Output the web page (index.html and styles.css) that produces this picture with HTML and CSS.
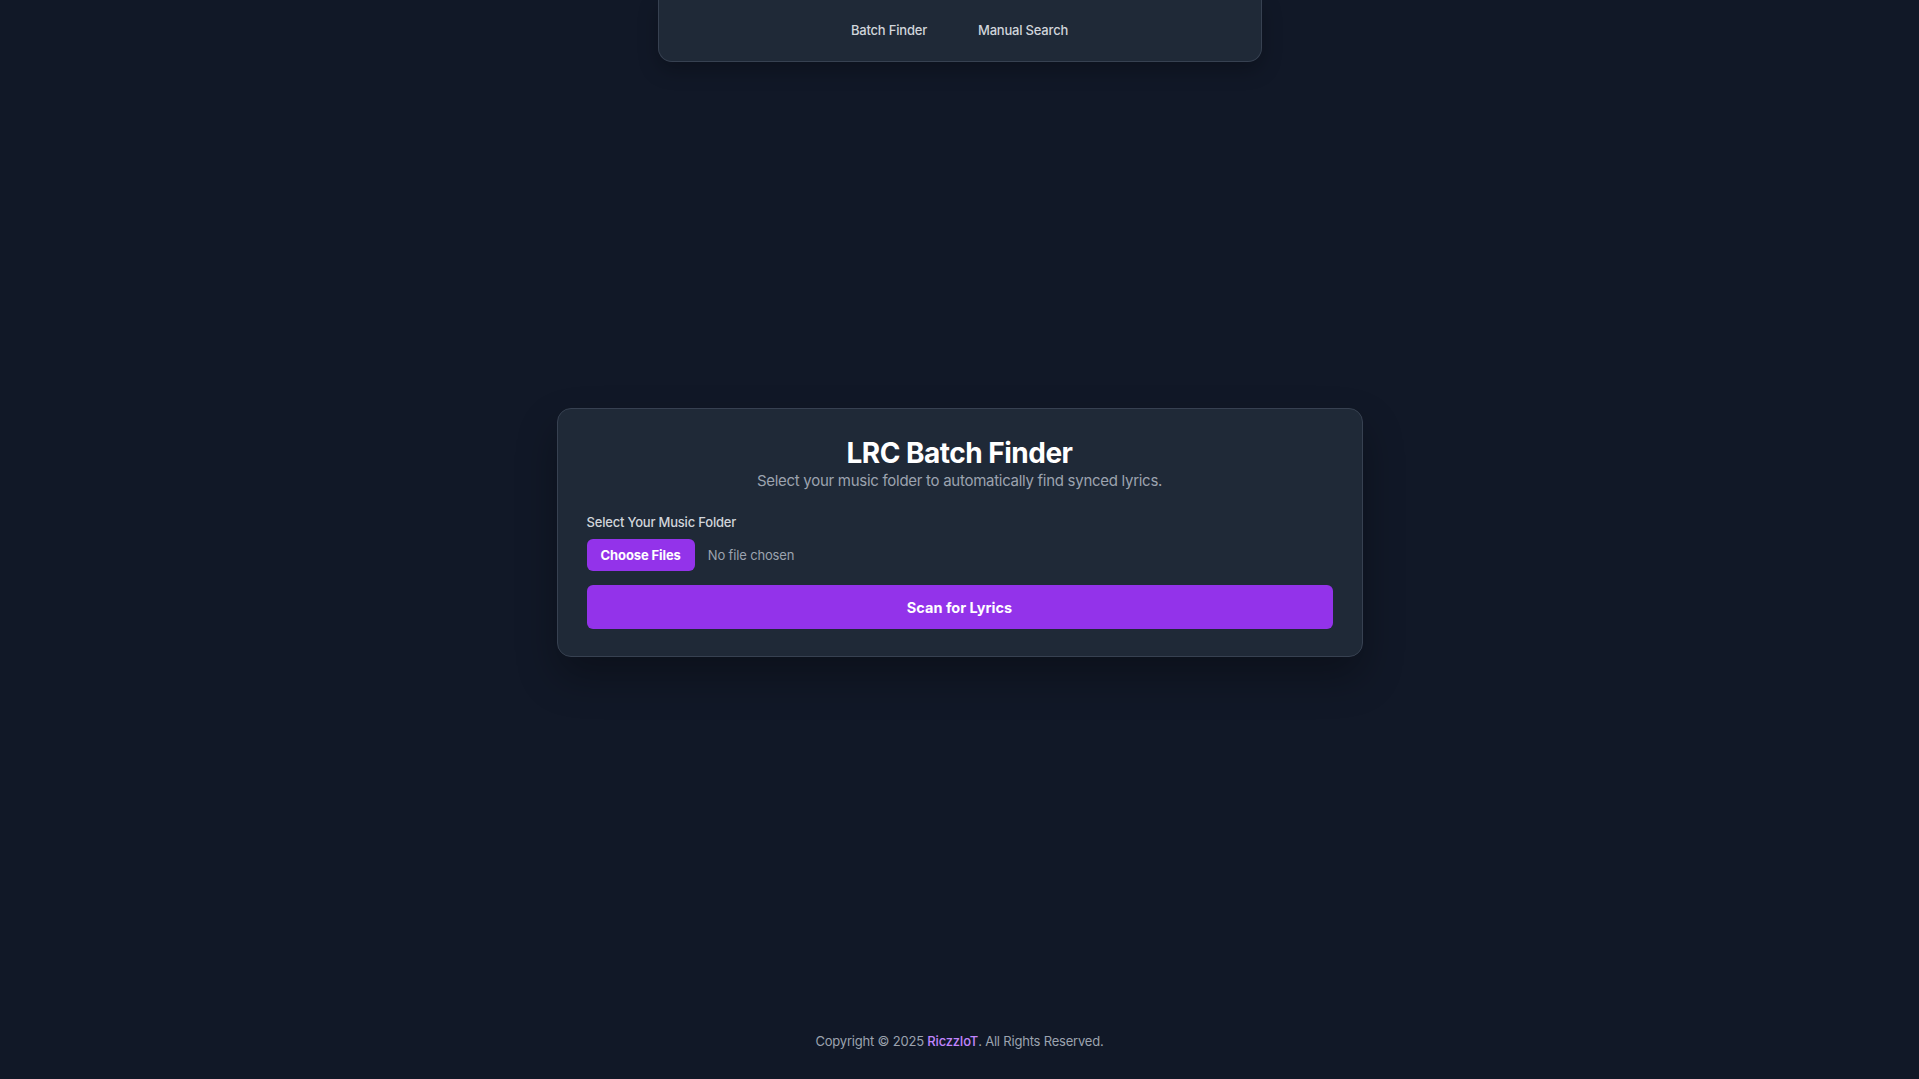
FILE: index.html
```html
<!DOCTYPE html>
<html lang="en">
<head>
<meta charset="utf-8">
<title>LRC Batch Finder</title>
<link rel="stylesheet" href="styles.css">
</head>
<body>
<div class="page">
  <header class="nav-wrap">
    <nav class="nav">
      <a class="nav-link" href="#">Batch Finder</a>
      <a class="nav-link" href="#">Manual Search</a>
    </nav>
  </header>
  <main class="main">
    <section class="card">
      <h1 class="title">LRC Batch Finder</h1>
      <p class="subtitle">Select your music folder to automatically find synced lyrics.</p>
      <div class="field-label">Select Your Music Folder</div>
      <label class="file-picker">
        <span class="file-btn">Choose Files</span>
        <span class="file-name">No file chosen</span>
      </label>
      <button class="scan-btn" type="button">Scan for Lyrics</button>
    </section>
  </main>
  <footer class="footer">
    <p class="footer-text">Copyright © 2025 <span class="brand">RiczzIoT</span>. All Rights Reserved.</p>
  </footer>
</div>
</body>
</html>
```

FILE: styles.css
```css
* { box-sizing: border-box; }
html, body { margin: 0; padding: 0; }
body {
  background: #111827;
  font-family: Inter, "Noto Sans", sans-serif;
  color: #d1d5db;
}
.page {
  min-height: 100vh;
  display: flex;
  flex-direction: column;
}
.nav-wrap {
  display: flex;
  justify-content: center;
}
.nav {
  width: 604px;
  height: 62px;
  background: #1f2937;
  border: 1px solid #374151;
  border-top: 0;
  border-radius: 0 0 14px 14px;
  display: flex;
  justify-content: center;
  align-items: flex-start;
  padding-top: 21px;
  gap: 51px;
  box-shadow: 0 8px 20px rgba(0,0,0,0.25);
}
.nav-link {
  color: #d1d5db;
  text-decoration: none;
  font-size: 13px;
  font-weight: 500;
  line-height: 18px;
  letter-spacing: -0.2px;
}
.main {
  flex: 1;
  display: flex;
  align-items: center;
  justify-content: center;
}
.card {
  width: 806px;
  background: #1f2937;
  border: 1px solid #374151;
  border-radius: 14px;
  padding: 28px 29px 27px;
  box-shadow: 0 20px 40px rgba(0,0,0,0.3);
}
.title {
  margin: 0;
  text-align: center;
  color: #ffffff;
  font-size: 28px;
  line-height: 32px;
  font-weight: 700;
  letter-spacing: -0.5px;
}
.subtitle {
  margin: 0 0 19px;
  text-align: center;
  color: #9ca3af;
  font-size: 15px;
  line-height: 24px;
  letter-spacing: -0.28px;
}
.field-label {
  font-size: 13px;
  font-weight: 500;
  line-height: 20px;
  color: #d1d5db;
  margin-bottom: 7px;
  letter-spacing: -0.2px;
}
.file-picker {
  display: flex;
  align-items: center;
  gap: 13px;
  margin-bottom: 14px;
}
.file-btn {
  display: inline-flex;
  align-items: center;
  justify-content: center;
  height: 32px;
  padding: 0 14px;
  background: #9333ea;
  color: #fff;
  border-radius: 6px;
  font-size: 13px;
  font-weight: 700;
  letter-spacing: -0.1px;
}
.file-name {
  font-size: 13px;
  color: #9ca3af;
  letter-spacing: -0.15px;
}
.scan-btn {
  display: block;
  width: 100%;
  height: 44px;
  border: 0;
  border-radius: 6px;
  background: #9333ea;
  color: #fff;
  font-family: inherit;
  font-size: 14.5px;
  font-weight: 700;
  cursor: pointer;
}
.footer {
  height: 76px;
  padding-top: 1px;
  text-align: center;
}
.footer-text {
  margin: 0;
  line-height: 75px;
  font-size: 13px;
  color: #9ca3af;
  letter-spacing: -0.2px;
}
.brand {
  color: #c084fc;
  font-weight: 500;
}
```
